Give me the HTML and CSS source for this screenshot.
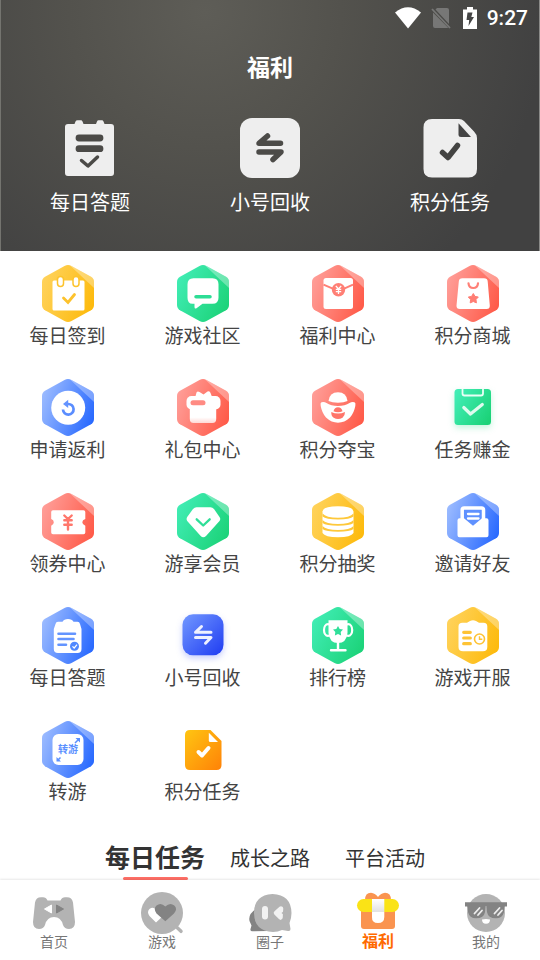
FILE: index.html
```html
<!DOCTYPE html>
<html lang="zh-CN">
<head>
<meta charset="utf-8">
<meta name="viewport" content="width=device-width, initial-scale=1">
<title>福利</title>
<link rel="stylesheet" href="styles.css">
</head>
<body>
<svg class="defs" width="0" height="0" aria-hidden="true">
  <defs>
    <linearGradient id="g-yellow" x1="0" y1=".3" x2="1" y2=".7"><stop offset="0" stop-color="#ffd25a"/><stop offset="1" stop-color="#fdba0c"/></linearGradient>
    <linearGradient id="g-green" x1="0" y1=".2" x2="1" y2=".8"><stop offset="0" stop-color="#41edb5"/><stop offset="1" stop-color="#1bd277"/></linearGradient>
    <linearGradient id="g-red" x1="0" y1=".3" x2="1" y2=".7"><stop offset="0" stop-color="#ff9d97"/><stop offset="1" stop-color="#ff5a48"/></linearGradient>
    <linearGradient id="g-blue" x1="0" y1=".3" x2="1" y2=".7"><stop offset="0" stop-color="#9abaff"/><stop offset="1" stop-color="#2869ff"/></linearGradient>
    <linearGradient id="g-indigo" x1="0" y1="0" x2="1" y2="1"><stop offset="0" stop-color="#7298ff"/><stop offset="1" stop-color="#1f3cf2"/></linearGradient>
    <linearGradient id="g-orange" x1="0" y1="0" x2="1" y2="1"><stop offset="0" stop-color="#ffc512"/><stop offset="1" stop-color="#ff8207"/></linearGradient>
    <linearGradient id="g-fade" x1="0" y1="0" x2="0" y2="1"><stop offset=".7" stop-color="#fff"/><stop offset="1" stop-color="#ffd9d5"/></linearGradient>
    <linearGradient id="g-ribbon" x1="0" y1="0" x2="0" y2="1"><stop offset="0" stop-color="#fff"/><stop offset=".52" stop-color="#e2e2e2"/><stop offset=".55" stop-color="#fff"/></linearGradient>
    <path id="hex" d="M26.5 1.9Q30 .1 33.5 1.9L53 12.8Q56 14.6 56 18V41Q56 44.4 53 46.2L33.5 57.1Q30 58.9 26.5 57.1L7 46.2Q4 44.4 4 41V18Q4 14.6 7 12.8Z"/>
    <path id="shine" d="M32 1.4L33.5 1.9L53 12.8Q56 14.6 56 18V24Z" fill="#fff" fill-opacity=".33"/>
    <path id="star" d="M0-5L1.7-2.1L5-1.5L2.7 1L3.1 4.4L0 3L-3.1 4.4L-2.7 1L-5-1.5L-1.7-2.1Z"/>
  </defs>
</svg>

<header class="hero">
  <div class="status">
    <svg width="26" height="22" viewBox="0 0 26 22"><path d="M0 5.5Q13-5 26 5.5L13 21.500Z" fill="#fff"/></svg>
    <svg width="20" height="22" viewBox="0 0 20 22"><path d="M5 2L6 1H16Q18 1 18 3V17L4.500 2.500ZM2 5.500L17 20.500Q16.500 21 16 21H4Q2 21 2 19Z" fill="#777776"/><path d="M1 2L19 21" stroke="#777776" stroke-width="1.800"/></svg>
    <svg class="battery" width="14" height="22" viewBox="0 0 14 22"><path d="M0 2.500H4V0H10V2.500H14V22H0Z" fill="#fff"/><path d="M4.500 5.500H9.500L8.300 10H11L5.500 19L6.200 13H3.500Z" fill="#444"/></svg>
    <time>9:27</time>
  </div>
  <h1>福利</h1>
  <nav class="quick" aria-label="快捷入口">
    <a href="#">
      <svg viewBox="0 0 60 60"><path d="M8 6H14.500L15.500 3.500Q16 2.300 17.500 2.300H21Q22 2.300 22.500 3.500L23.500 6H36L37 3.500Q37.500 2.300 38.500 2.300H42Q43 2.300 43.500 3.500L44.500 6H51Q54 6 54 9V55Q54 58 51 58H8Q5 58 5 55V9Q5 6 8 6Z" fill="#eee"/><path d="M19 20H40M19 30.700H40" stroke="#4b4a47" stroke-width="6.800" stroke-linecap="round"/><path d="M21.500 42.500L28 48L37.500 39" fill="none" stroke="#4b4a47" stroke-width="3.500" stroke-linecap="round" stroke-linejoin="round"/></svg>
      <span>每日答题</span>
    </a>
    <a href="#">
      <svg viewBox="0 0 60 60"><rect width="60" height="60" rx="12" fill="#eee"/><path d="M40.500 25.300H19L27.500 18M19 34H41L33 41.500" fill="none" stroke="#4c4b48" stroke-width="5.500" stroke-linecap="round" stroke-linejoin="round"/></svg>
      <span>小号回收</span>
    </a>
    <a href="#">
      <svg viewBox="0 0 60 60"><path d="M12 1H39Q42 1 44 3L54 13.500Q57 16.500 57 20V51Q57 59.500 48.500 59.500H12Q3.500 59.500 3.500 51V9.500Q3.500 1 12 1Z" fill="#eee"/><path d="M38.500 5.300V16.500Q38.500 19 41 19H51Z" fill="#444"/><path d="M22.500 34.500L28 39.500L37.500 27.500" fill="none" stroke="#434342" stroke-width="5.500" stroke-linecap="round" stroke-linejoin="round"/></svg>
      <span>积分任务</span>
    </a>
  </nav>
</header>

<main>
  <nav class="grid" aria-label="福利功能">
    <a href="#">
      <svg viewBox="0 0 60 60"><use href="#hex" fill="url(#g-yellow)"/><use href="#shine"/><rect x="14.500" y="16.500" width="32" height="30" rx="1.500" fill="#fff"/><g fill="#fff" stroke="#fdc32c" stroke-width="1.500"><rect x="19.500" y="12.500" width="6" height="10" rx="3"/><rect x="35" y="12.500" width="6" height="10" rx="3"/></g><path d="M25.500 34L30 38.500L36.500 30.500" fill="none" stroke="#fdc22c" stroke-width="2.800" stroke-linecap="round"/></svg>
      <span>每日签到</span>
    </a>
    <a href="#">
      <svg viewBox="0 0 60 60"><use href="#hex" fill="url(#g-green)"/><use href="#shine"/><path d="M20.500 14.300H39.500Q45.500 14.300 45.500 20.300V33.700Q45.500 39.700 39.500 39.700H29.500L23.500 44.200Q21.500 45.200 21.500 43V39.700H19.500Q14.500 39.700 14.500 33.700V20.300Q14.500 14.300 20.500 14.300Z" fill="#fff"/><path d="M23 32.700H37" stroke="#2ddd95" stroke-width="3.500" stroke-linecap="round"/></svg>
      <span>游戏社区</span>
    </a>
    <a href="#">
      <svg viewBox="0 0 60 60"><use href="#hex" fill="url(#g-red)"/><use href="#shine"/><rect x="15.500" y="14" width="29.500" height="31" rx="2.500" fill="#fff"/><path d="M15.500 20.700L26 25.200M45 20.700L35 25.200" stroke="#ff7f75" stroke-width="2"/><circle cx="30.500" cy="25.700" r="6.700" fill="#ff7f75"/><path d="M27.800 21.800L30.500 25L33.200 21.800M27.800 25.400H33.200M27.800 27.600H33.200M30.500 25V30" fill="none" stroke="#fff" stroke-width="1.300"/></svg>
      <span>福利中心</span>
    </a>
    <a href="#">
      <svg viewBox="0 0 60 60"><use href="#hex" fill="url(#g-red)"/><use href="#shine"/><path d="M19.500 14.300H41Q44.500 14.300 44.700 17.500L46.800 41.500Q47 45 43.500 45H17Q13.300 45 13.500 41.500L15.800 17.500Q16 14.300 19.500 14.300Z" fill="#fff"/><path d="M25.500 19.300Q26 24 30.300 24Q34.500 24 35 19.300" fill="none" stroke="#ff8077" stroke-width="2.200" stroke-linecap="round"/><use href="#star" x="30.300" y="34.500" fill="#ff7d73" stroke="#ff7d73" stroke-width="1" stroke-linejoin="round"/></svg>
      <span>积分商城</span>
    </a>

    <a href="#">
      <svg viewBox="0 0 60 60"><use href="#hex" fill="url(#g-blue)"/><use href="#shine"/><circle cx="30.200" cy="29.700" r="17" fill="#fff"/><path d="M25 31.500A5.300 5.300 0 1 0 30 26" fill="none" stroke="#5a8dff" stroke-width="2.700"/><path d="M25 26L30.200 21.800V30Z" fill="#6493ff"/></svg>
      <span>申请返利</span>
    </a>
    <a href="#">
      <svg viewBox="0 0 60 60"><use href="#hex" fill="url(#g-red)"/><use href="#shine"/><path d="M22 20L23.500 14.500Q24.500 12.800 26.500 14L30.500 16.500L34.500 13.500Q37 12.800 37.500 15L39.500 20Z" fill="#fff"/><path d="M16.800 26H43.200V41Q43.200 45 39.500 45H20.500Q16.800 45 16.800 41Z" fill="url(#g-fade)"/><rect x="13.500" y="18" width="34" height="13.500" rx="5" fill="#fff"/><rect x="17.500" y="22.300" width="15" height="5" rx="2.500" fill="#ff8b83"/></svg>
      <span>礼包中心</span>
    </a>
    <a href="#">
      <svg viewBox="0 0 60 60"><use href="#hex" fill="url(#g-red)"/><use href="#shine"/><path d="M20.500 23Q21.500 14.300 30 14.300T39.500 23Q36 24.700 30 24.700T20.500 23Z" fill="#fff"/><path d="M13.500 24.300Q16 23.300 18.500 25Q23 28 30 28T41.500 25Q44 23.300 46.500 24.300Q48 25 47.300 28Q46 35 42 39.500Q36.500 44.700 30 44.700T18 39.500Q14 35 12.700 28Q12 25 13.500 24.300Z" fill="#fff"/><path d="M25.500 33.200Q26.500 29.300 30 29.300T34.500 33.200Q30 35.200 25.500 33.200ZM23.300 34Q30 37 37 34Q37 38 34.500 39.700Q30 42.200 25.700 39.700Q23 38 23.300 34Z" fill="#ff756a"/></svg>
      <span>积分夺宝</span>
    </a>
    <a href="#">
      <svg class="glow-green" viewBox="0 0 60 60"><rect x="11.500" y="11" width="36.500" height="36" rx="3.500" fill="url(#g-green)"/><path d="M19.500 11V15.500Q19.500 17.500 21.500 17.500H38Q40 17.500 40 15.500V11" fill="none" stroke="#e9fff6" stroke-width="1.800"/><path d="M20.800 29.500L27.500 36L39.300 26.500" fill="none" stroke="#dffbee" stroke-width="3.200" stroke-linecap="round" stroke-linejoin="round"/></svg>
      <span>任务赚金</span>
    </a>

    <a href="#">
      <svg viewBox="0 0 60 60"><use href="#hex" fill="url(#g-red)"/><use href="#shine"/><path d="M15 18.300H45.500Q47.300 18.300 47.300 20V27Q44.300 28 44.300 30.300T47.300 33.700V40.500Q47.300 42.300 45.500 42.300H15Q13.200 42.300 13.200 40.500V33.700Q15.800 32.700 15.800 30.300T13.200 27V20Q13.200 18.300 15 18.300Z" fill="#fff"/><path d="M26.300 23.500L30 27L33.700 23.500M26.300 28.200H33.700M26.300 32.700H33.700M30 27.500V37.500" fill="none" stroke="#ff776c" stroke-width="2.400" stroke-linecap="round"/></svg>
      <span>领券中心</span>
    </a>
    <a href="#">
      <svg viewBox="0 0 60 60"><use href="#hex" fill="url(#g-green)"/><use href="#shine"/><path d="M23.500 15.300H37.500Q39.500 15.300 41 17L46.500 25Q48 27 46.500 29L33 44Q30.300 46.500 27.700 44L14.200 29Q13 27 14.200 25L20 17Q21.500 15.300 23.500 15.300Z" fill="#fff"/><path d="M23.700 27.300L30.200 33.500L36.700 27.300" fill="none" stroke="#2fde98" stroke-width="2.300" stroke-linecap="round" stroke-linejoin="round"/></svg>
      <span>游享会员</span>
    </a>
    <a href="#">
      <svg viewBox="0 0 60 60"><use href="#hex" fill="url(#g-yellow)"/><use href="#shine"/><path d="M14.500 19.500Q15 14.300 30 14.300T45.500 19.500V41Q43 45.200 30 45.200T14.500 41Z" fill="#fff"/><g fill="#fec83a"><path d="M14.500 21.500Q18 25.700 30 25.700T45.500 21.500V24.500Q42 27.500 30 27.500T14.500 24.500Z"/><path d="M14.500 28Q18 32 30 32T45.500 28V31Q42 33.800 30 33.800T14.500 31Z"/><path d="M14.500 34Q18 38 30 38T45.500 34V37Q42 39.800 30 39.800T14.500 37Z"/></g></svg>
      <span>积分抽奖</span>
    </a>
    <a href="#">
      <svg viewBox="0 0 60 60"><use href="#hex" fill="url(#g-blue)"/><use href="#shine"/><path d="M19.200 29V18Q19.200 16 21.200 16H38.500Q40.500 16 40.500 18V29" fill="#5f91ff" stroke="#fff" stroke-width="3.500"/><path d="M22 27.500H38.500L30 34.500Z" fill="#5f91ff"/><path d="M25 22H35.500M25 26.500H35.500" stroke="#fff" stroke-width="2.300" stroke-linecap="round"/><path d="M16.500 26.300H21L30 33.700L39 26.300H43.500Q45.500 26.300 45.500 28.300V43.300Q45.500 45.300 43.500 45.300H16.500Q14.500 45.300 14.500 43.300V28.300Q14.500 26.300 16.500 26.300Z" fill="#fff"/></svg>
      <span>邀请好友</span>
    </a>

    <a href="#">
      <svg viewBox="0 0 60 60"><use href="#hex" fill="url(#g-blue)"/><use href="#shine"/><path d="M20 15.700H24.500Q26 13 30 13T35.500 15.700H39.500Q41.500 15.700 42 18L43.500 23V43Q43.500 47 39.500 47H20Q15.800 47 15.800 43V23L17.500 18Q18 15.700 20 15.700Z" fill="#fff"/><path d="M20.500 27.700H37M20.500 33H35.500M20.500 38.700H28" stroke="#6394ff" stroke-width="2.600" stroke-linecap="round"/><circle cx="36.500" cy="40.300" r="4.500" fill="#5088ff"/><path d="M34.500 40.300L36.200 42L39 38.700" fill="none" stroke="#fff" stroke-width="1.200"/></svg>
      <span>每日答题</span>
    </a>
    <a href="#">
      <svg class="glow-blue" viewBox="0 0 60 60"><rect x="9.500" y="8.300" width="41" height="41" rx="10.500" fill="url(#g-indigo)"/><path d="M38 26.300H22.500L28.500 20.500M22.500 31.500H38L32.500 37.200" fill="none" stroke="#eef1ff" stroke-width="3" stroke-linecap="round" stroke-linejoin="round"/></svg>
      <span>小号回收</span>
    </a>
    <a href="#">
      <svg viewBox="0 0 60 60"><use href="#hex" fill="url(#g-green)"/><use href="#shine"/><g fill="none" stroke="#fff" stroke-width="2.200"><ellipse cx="20" cy="24" rx="4" ry="5.800"/><ellipse cx="40.200" cy="24" rx="4" ry="5.800"/></g><path d="M20.500 14.300H39.500V27Q38.500 37 30 37T20.500 27Z" fill="#fff"/><path d="M30 36V44M23 44.300H37.500" stroke="#fff" stroke-width="2.400" stroke-linecap="round"/><use href="#star" x="30" y="25" fill="#2fdf99"/></svg>
      <span>排行榜</span>
    </a>
    <a href="#">
      <svg viewBox="0 0 60 60"><use href="#hex" fill="url(#g-yellow)"/><use href="#shine"/><path d="M19.500 16.800H24L27 14.900Q30 13.500 33 14.900L36 16.800H40.500Q44.300 16.800 44.300 20.500V41Q44.300 45.300 40 45.300H20Q15.500 45.300 15.500 41V20.500Q15.500 16.800 19.500 16.800Z" fill="#fff"/><path d="M20.700 26.300H27.300M20.700 32H27.300M20.700 37.700H27.300" stroke="#fec334" stroke-width="3.200" stroke-linecap="round"/><circle cx="36.500" cy="33" r="5" fill="none" stroke="#fec334" stroke-width="1.600"/><path d="M36.500 30.200V33.200H39.300" fill="none" stroke="#fec334" stroke-width="1.400"/></svg>
      <span>游戏开服</span>
    </a>

    <a href="#">
      <svg viewBox="0 0 60 60"><use href="#hex" fill="url(#g-blue)"/><use href="#shine"/><rect x="14.500" y="14" width="31" height="31" rx="6" fill="#fff"/><text class="glyph" x="30" y="33" text-anchor="middle">转游</text><path d="M37 23L40.500 19.500M22.500 37.500L19.500 40.500" stroke="#5b90ff" stroke-width="1.500"/><path d="M37.500 18H42V22.500ZM18.500 37V41.500H23Z" fill="#5b90ff"/></svg>
      <span>转游</span>
    </a>
    <a href="#">
      <svg viewBox="0 0 60 60"><path d="M17 10H37.500L48.500 21V45Q48.500 50 43.500 50H17Q12 50 12 45V15Q12 10 17 10Z" fill="url(#g-orange)"/><path d="M35.800 12.700V20.500Q35.800 22 37.300 22H45Z" fill="#fff"/><path d="M25.500 32L29 35.500L35.500 28" fill="none" stroke="#fff" stroke-width="4" stroke-linecap="round" stroke-linejoin="round"/></svg>
      <span>积分任务</span>
    </a>
  </nav>

  <div class="tabs" role="tablist">
    <button type="button" role="tab" aria-selected="true" class="tab active">每日任务</button>
    <button type="button" role="tab" aria-selected="false" class="tab">成长之路</button>
    <button type="button" role="tab" aria-selected="false" class="tab">平台活动</button>
  </div>
</main>

<nav class="bottom" aria-label="主导航">
  <a href="#">
    <svg viewBox="0 0 44 44"><path d="M9 7.300H11Q14 7.300 15.500 10.500H28.500Q30 7.300 33 7.300H35Q40 7.300 41 12.500L43 32Q43 39 37 39Q32.500 39 31 35Q29 27 22 27T13 35Q11.500 39 7 39Q1 39 1 32L3 12.500Q4 7.300 9 7.300Z" fill="#b3b3b3"/><path d="M19.500 15V23L12.500 19Z" fill="#fff" stroke="#fff" stroke-linejoin="round"/><path d="M24.500 15V23L31.500 19Z" fill="#838383" stroke="#838383" stroke-linejoin="round"/></svg>
    <span>首页</span>
  </a>
  <a href="#">
    <svg viewBox="0 0 44 44"><path d="M37 37.500L41 41.300" stroke="#b3b3b3" stroke-width="3.500" stroke-linecap="round"/><circle cx="22" cy="23" r="21" fill="#b3b3b3"/><path d="M16 32.500L9.500 26Q6.500 22 9.500 19Q13 16.500 16 19.500L24 25Z" fill="#fff"/><path d="M25.300 31.300L16.500 23.500Q13 18.500 16.500 15.500Q21 12 25.300 16.500Q30 12 34.300 15.500Q38 19 34 23.500Z" fill="#838383"/></svg>
    <span>游戏</span>
  </a>
  <a href="#">
    <svg viewBox="0 0 44 44"><path d="M8 19Q0 24 1.500 31L3.500 35.500L2.500 39Q2 41.500 5 41.200L20 41Z" fill="#838383"/><path d="M24.500 4Q43 4.500 43.500 23Q43.500 28 41.500 33L42.500 39Q42.500 41.500 40 41L34 40Q30 42 25 42Q6 41 6 23Q6 5 24.500 4Z" fill="#b3b3b3"/><rect x="14" y="16" width="6" height="13.500" rx="3" fill="#f2f2f2"/><path d="M33 18.500L28 23L32.500 27.500Z" fill="#f2f2f2" stroke="#f2f2f2" stroke-width="4.500" stroke-linejoin="round"/><path d="M37 20L33.500 23L37 26Z" fill="#b3b3b3"/></svg>
    <span>圈子</span>
  </a>
  <a href="#" class="current" aria-current="page">
    <svg viewBox="0 0 44 44"><path d="M9 10Q9 2.700 15 2.700Q19 3 22 7Q25 3 29 2.700Q35 2.700 35 10Z" fill="#fa9450"/><path d="M5 18H39V36Q39 39 36 39H8Q5 39 5 36Z" fill="#fa9450"/><rect x="1" y="9" width="42" height="13" rx="6.500" fill="#fae316"/><path d="M16 9H28.300V27Q28.300 33 22 33T16 27Z" fill="url(#g-ribbon)"/></svg>
    <span>福利</span>
  </a>
  <a href="#">
    <svg viewBox="0 0 44 44"><circle cx="22" cy="23" r="19" fill="#b3b3b3"/><path d="M1 12.300H43V16.500H40.800L40 22Q38.500 28.300 32 28.300Q24 28.300 23 22L22.500 16H21.500L21 22Q20 28.300 12 28.300Q5.500 28.300 4 22L3.200 16.500H1Z" fill="#838383"/><path d="M10.500 23.500L15.500 18M14 25L18 20.500M30.500 23.500L35.500 18M34 25L38 20.500" stroke="#eee" stroke-width="1.800" stroke-linecap="round"/><path d="M18 29.500Q22 28.700 26 29.500Q26 33.700 22 33.700T18 29.500Z" fill="#fff"/></svg>
    <span>我的</span>
  </a>
</nav>
</body>
</html>
```
FILE: styles.css
```css
* {
  box-sizing: border-box;
}

body {
  margin: 0;
  min-height: 100vh;
  display: flex;
  flex-direction: column;
  background: #fff;
  color: #444;
  font-family: Roboto, "Noto Sans CJK SC", sans-serif;
}

a {
  color: inherit;
  text-decoration: none;
}

svg {
  display: block;
}

.defs {
  position: absolute;
}

.hero {
  padding-bottom: 36px;
  background: radial-gradient(circle 340px at 38% 12px, #5e5d57, #53524d 40%, #414141);
  box-shadow: inset 1px 0 #74746f, inset -1px 0 #8a8a88;
  color: #fff;
}

.status {
  display: flex;
  justify-content: flex-end;
  align-items: center;
  height: 36px;
  padding-right: 12px;
  gap: 10px;
  font-size: 21px;
  font-weight: 500;
}

.status svg {
  margin-bottom: 1px;
}

.battery {
  margin-left: 2px;
}

.hero h1 {
  margin: 0;
  padding: 17px 0 15px;
  font-size: 23px;
  line-height: 32px;
  font-weight: 700;
  text-align: center;
}

.quick {
  display: grid;
  grid-template-columns: repeat(3, 1fr);
  padding-top: 18px;
}

.quick a,
.grid a,
.bottom a {
  display: flex;
  flex-direction: column;
  align-items: center;
}

.quick a {
  gap: 13px;
  font-size: 20px;
  line-height: 24px;
}

.quick svg,
.grid svg {
  width: 60px;
  height: 60px;
}

.grid {
  display: grid;
  grid-template-columns: repeat(4, 1fr);
  row-gap: 30px;
  padding-top: 13px;
}

.grid a {
  gap: 2px;
  font-size: 19px;
  line-height: 22px;
}

.glow-green {
  filter: drop-shadow(0 3px 3px #1bd27740);
}

.glow-blue {
  filter: drop-shadow(0 3px 3px #1f3cf240);
}

.glyph {
  fill: #5b90ff;
  font-size: 10px;
  font-weight: 700;
}

.tabs {
  display: grid;
  grid-template-columns: repeat(3, 115px);
  justify-content: center;
  padding-top: 34px;
}

.tab {
  position: relative;
  padding: 0;
  border: 0;
  background: none;
  color: #333;
  font-family: inherit;
  font-size: 20px;
  line-height: 42px;
}

.tab.active {
  font-size: 25px;
  font-weight: 700;
}

.tab.active::after {
  content: "";
  position: absolute;
  left: 25px;
  right: 25px;
  bottom: 0;
  height: 3px;
  border-radius: 2px;
  background: #ff6f66;
}

.bottom {
  position: sticky;
  bottom: 0;
  display: grid;
  grid-template-columns: repeat(5, 1fr);
  margin-top: auto;
  padding: 10px 0;
  background: #fff;
  box-shadow: 0 -1px 2px #00000018;
}

.bottom a {
  color: #777;
  font-size: 14px;
  line-height: 16px;
}

.bottom svg {
  width: 44px;
  height: 44px;
}

.bottom .current {
  color: #ff6a00;
  font-size: 16px;
  font-weight: 700;
}
```
